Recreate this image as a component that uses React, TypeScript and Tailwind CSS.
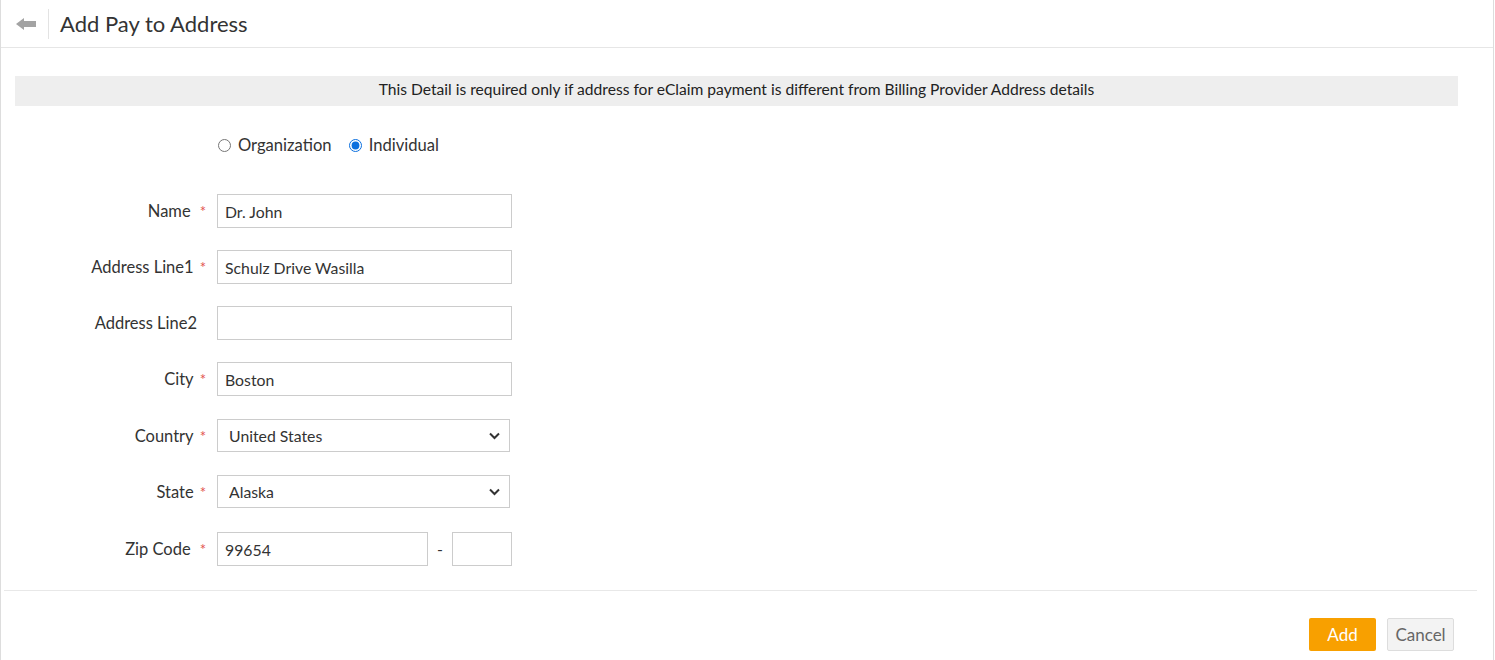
import React from "react";

const font = { fontFamily: "Lato, 'Open Sans', Arial, sans-serif" };

function BackArrow() {
  return (
    <svg width="20" height="12" viewBox="0 0 20 12" aria-hidden="true">
      <path d="M0 6 L8 0 L8 3 L20 3 L20 9 L8 9 L8 12 Z" fill="#a3a3a3" />
    </svg>
  );
}

function Chevron() {
  return (
    <svg
      width="11"
      height="8"
      viewBox="0 0 11 8"
      className="pointer-events-none absolute right-[10px] top-1/2 -translate-y-1/2"
      aria-hidden="true"
    >
      <path d="M1 1.5 L5.5 6 L10 1.5" fill="none" stroke="#333" strokeWidth="2" />
    </svg>
  );
}

interface FieldRowProps {
  label: string;
  required?: boolean;
  wide?: boolean;
  height?: string;
  children: React.ReactNode;
}

function FieldRow({
  label,
  required = false,
  wide = false,
  height = "h-[56px]",
  children,
}: FieldRowProps) {
  return (
    <div className={`flex items-start gap-[11px] ${height}`}>
      <label className="flex h-[34px] w-[191px] items-center justify-end text-[16.5px] text-[#333]">
        <span>{label}</span>
        {required ? (
          <span className={`${wide ? "ml-[9px]" : "ml-[6px]"} text-[15px] text-[#e2544b]`}>*</span>
        ) : (
          <span className="w-[9px]" />
        )}
      </label>
      {children}
    </div>
  );
}

function TextInput({ value, width = "w-[295px]" }: { value: string; width?: string }) {
  return (
    <input
      type="text"
      defaultValue={value}
      className={`${width} h-[34px] border border-[#cccccc] bg-white px-[7px] text-[15.8px] text-[#333] outline-none`}
      style={font}
    />
  );
}

function SelectInput({ value }: { value: string }) {
  return (
    <div className="relative">
      <select
        defaultValue={value}
        className="h-[33px] w-[293px] appearance-none border border-[#cccccc] bg-white pl-[11px] text-[15.8px] text-[#333] outline-none"
        style={font}
      >
        <option>{value}</option>
      </select>
      <Chevron />
    </div>
  );
}

export default function App() {
  return (
    <div className="h-[660px] w-[1495px] bg-white" style={font}>
      <div className="h-full w-[1494px] border-x border-[#dddddd]">
        <div className="flex h-[48px] items-center border-b border-[#e6e6e6]">
          <div className="flex w-[47px] items-center pl-[15px]">
            <BackArrow />
          </div>
          <div className="h-[30px] w-px bg-[#e3e3e3]" />
          <h1 className="ml-[11px] text-[22px] text-[#333]">Add Pay to Address</h1>
        </div>

        <div className="pl-[14px] pr-[35px] pt-[28px]">
          <div className="flex h-[30px] items-center justify-center bg-[#eeeeee] pb-[2px] text-[15.6px] text-[#222]">
            This Detail is required only if address for eClaim payment is different from Billing
            Provider Address details
          </div>

          <div className="ml-[203px] mt-[29px] flex h-[20px] items-center text-[16.6px] text-[#333]">
            <label className="flex items-center">
              <input type="radio" name="kind" className="m-0 h-[13px] w-[13px] accent-[#0b6fde]" />
              <span className="ml-[7px]">Organization</span>
            </label>
            <label className="ml-[17px] flex items-center">
              <input
                type="radio"
                name="kind"
                defaultChecked
                className="m-0 h-[13px] w-[13px] accent-[#0b6fde]"
              />
              <span className="ml-[7px]">Individual</span>
            </label>
          </div>

          <div className="mt-[39px] flex flex-col">
            <FieldRow label="Name" required wide>
              <TextInput value="Dr. John" />
            </FieldRow>
            <FieldRow label="Address Line1" required>
              <TextInput value="Schulz Drive Wasilla" />
            </FieldRow>
            <FieldRow label="Address Line2">
              <TextInput value="" />
            </FieldRow>
            <FieldRow label="City" required height="h-[57px]">
              <TextInput value="Boston" />
            </FieldRow>
            <FieldRow label="Country" required>
              <SelectInput value="United States" />
            </FieldRow>
            <FieldRow label="State" required height="h-[57px]">
              <SelectInput value="Alaska" />
            </FieldRow>
            <FieldRow label="Zip Code" required wide height="h-[34px]">
              <div className="flex items-center">
                <TextInput value="99654" width="w-[211px]" />
                <span className="mx-[9px] text-[16px] text-[#333]">-</span>
                <TextInput value="" width="w-[60px]" />
              </div>
            </FieldRow>
          </div>
        </div>

        <div className="ml-[3px] mr-[16px] mt-[24px] border-t border-[#e8e8e8]" />

        <div className="mt-[27px] flex justify-end gap-[11px] pr-[39px]">
          <button className="h-[33px] w-[67px] rounded-[2px] bg-[#f8a000] text-[17px] text-white">
            Add
          </button>
          <button className="h-[33px] w-[67px] rounded-[2px] border border-[#dddddd] bg-[#f3f3f3] text-[17px] text-[#666]">
            Cancel
          </button>
        </div>
      </div>
    </div>
  );
}
